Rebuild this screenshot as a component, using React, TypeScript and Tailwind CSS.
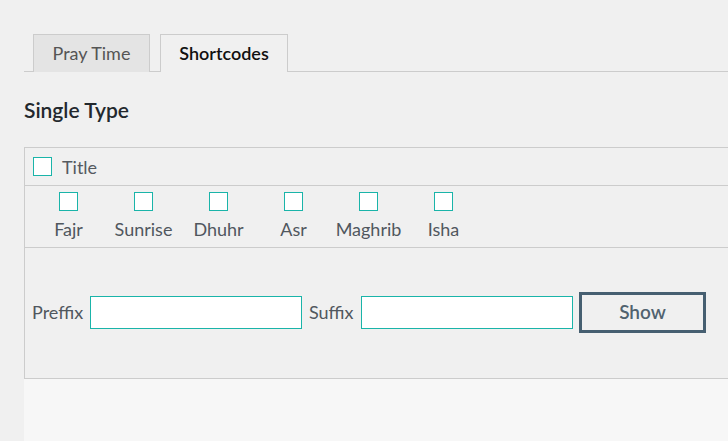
import React from "react";

const font = { fontFamily: 'Lato, "Open Sans", sans-serif' };

export default function App() {
  const prayers = ["Fajr", "Sunrise", "Dhuhr", "Asr", "Maghrib", "Isha"];
  return (
    <div className="w-[728px] h-[441px] overflow-hidden bg-[#f0f0f0] flex flex-col pl-[24px]" style={font}>
      {/* tabs */}
      <div className="h-[34px] shrink-0" />
      <div className="flex items-end border-b border-[#cccccc] h-[38px] shrink-0 pl-[9px] gap-[10px]">
        <div className="w-[117px] h-[38px] border border-[#cccccc] border-b-0 bg-[#e4e4e4] flex items-center justify-center text-[18px] text-[#555555] mb-[-1px] pb-[1px]">
          Pray Time
        </div>
        <div className="w-[128px] h-[38px] border border-[#cccccc] border-b-0 bg-[#f0f0f0] flex items-center justify-center text-[18px] font-semibold text-[#111111] mb-[-1px] pb-[1px] relative z-10">
          Shortcodes
        </div>
      </div>
      <div className="h-[75px] shrink-0 flex items-center">
        <h2 className="text-[21px] font-semibold text-[#23282d] mt-[1px]">Single Type</h2>
      </div>
      {/* box */}
      <div className="w-[720px] border border-[#cccccc] border-r-0 shrink-0 bg-[#f0f0f0]">
        <div className="h-[38px] flex items-center pl-[8px] border-b border-[#cccccc]">
          <span className="shrink-0 w-[19px] h-[19px] border border-[#1ab4a9] bg-white" />
          <span className="ml-[10px] text-[18px] text-[#555a60] mt-[1px]">Title</span>
        </div>
        <div className="h-[62px] flex pl-[6px] border-b border-[#cccccc]">
          {prayers.map((p) => (
            <div key={p} className="w-[75px] flex flex-col items-center pt-[6px]">
              <span className="shrink-0 w-[19px] h-[19px] border border-[#1ab4a9] bg-white" />
              <span className="mt-[7px] text-[18px] text-[#50575e] leading-[22px]">{p}</span>
            </div>
          ))}
        </div>
        <div className="h-[130px] flex items-center pl-[7px] pb-[2px]">
          <span className="w-[52px] text-[18px] text-[#50575e]">Preffix</span>
          <input className="ml-[6px] w-[212px] h-[33px] border border-[#1ab4a9] bg-white outline-none" />
          <span className="ml-[7px] w-[48px] text-[18px] text-[#50575e]">Suffix</span>
          <input className="ml-[4px] w-[212px] h-[33px] border border-[#1ab4a9] bg-white outline-none" />
          <button className="ml-[6px] w-[127px] h-[41px] border-[3px] border-[#465f71] bg-[#f0f0f0] text-[19px] font-semibold text-[#50626f]">
            Show
          </button>
        </div>
      </div>
      <div className="flex-1 bg-[#f7f7f7]" />
    </div>
  );
}
